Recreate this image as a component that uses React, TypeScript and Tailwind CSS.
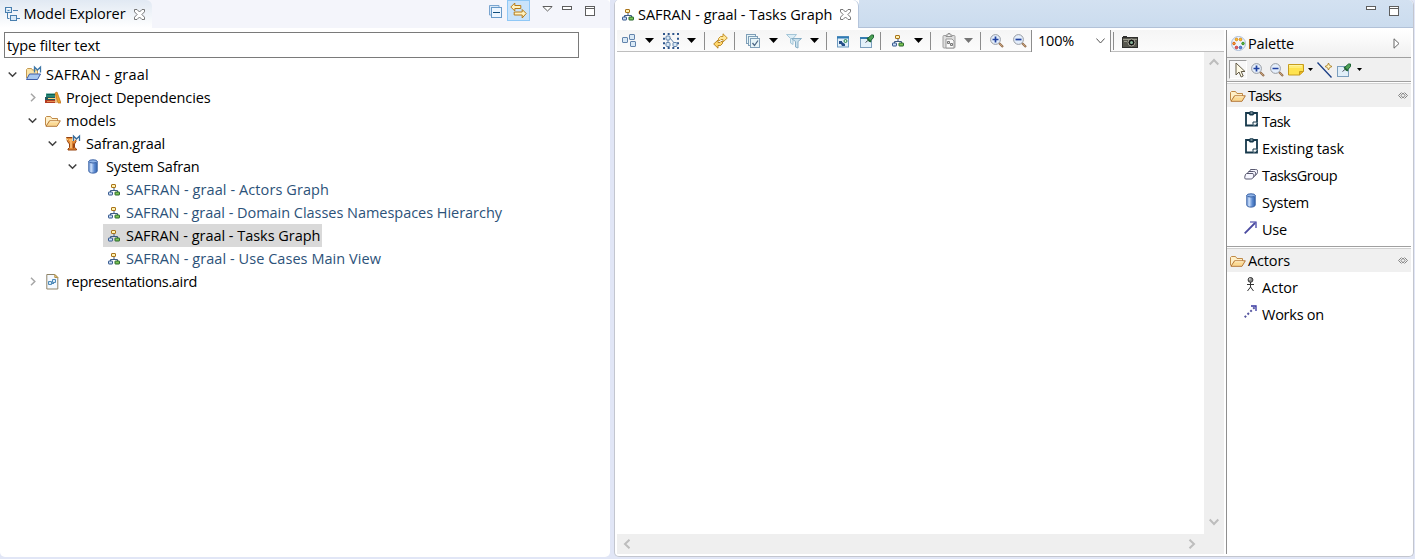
import { useLayoutEffect, useRef, useState } from "react";
import type { ReactNode } from "react";

/** Single-line label whose tracking is adjusted to fill a given width. */
function Label({ text, w, className = "" }: { text: string; w: number; className?: string }) {
  const ref = useRef<HTMLSpanElement>(null);
  const [spacing, setSpacing] = useState(0);
  useLayoutEffect(() => {
    if (ref.current) {
      const natural = ref.current.getBoundingClientRect().width - spacing * text.length;
      setSpacing((w - natural) / text.length);
    }
  }, [text, w]);
  return (
    <span className={`block shrink-0 whitespace-pre ${className}`}>
      <span ref={ref} className="inline-block" style={{ letterSpacing: spacing }}>
        {text}
      </span>
    </span>
  );
}

function Icon({ children, className = "", w = 16, h = 16 }: { children: ReactNode; className?: string; w?: number; h?: number }) {
  return (
    <svg width={w} height={h} viewBox={`0 0 ${w} ${h}`} fill="none" className={`block shrink-0 ${className}`}>
      {children}
    </svg>
  );
}

const Hierarchy = ({ className = "" }: { className?: string }) => (
  <Icon w={12} h={12} className={className}>
    <path d="M6 4v2.500M2.500 8.500V6.500h7v2" stroke="#3c5a82" />
    <rect x="3.500" y=".5" width="4" height="3" rx=".4" fill="#fff3b0" stroke="#a9741b" />
    <rect x=".5" y="8" width="4" height="3" rx=".4" fill="#c9dcf4" stroke="#33568d" />
    <rect x="7" y="8" width="4.500" height="3" rx=".4" fill="#7cc455" stroke="#27652b" />
  </Icon>
);

const Folder = ({ className = "" }: { className?: string }) => (
  <Icon className={className}>
    <path d="M.5 12.500V4.500l1-1h4l1.500 2h5.500v3" fill="#fff0c8" stroke="#c08a48" />
    <path d="M1 13.300 4.500 7.800h10.800l-3.300 5.500z" fill="#fbd993" stroke="#b5783a" strokeLinejoin="round" />
    <path d="M5 8.800h8.500" stroke="#fff2cf" />
  </Icon>
);

const Cylinder = ({ className = "" }: { className?: string }) => (
  <Icon w={10} h={15} className={className}>
    <defs>
      <linearGradient id="cyl" x1="0" x2="1" y1="0" y2="0">
        <stop offset="0" stopColor="#7fa5e0" />
        <stop offset=".3" stopColor="#c6dbf8" />
        <stop offset=".65" stopColor="#5d8bd2" />
        <stop offset="1" stopColor="#3465ab" />
      </linearGradient>
    </defs>
    <path d="M.8 2.500v9.500C.8 14.800 9.200 14.800 9.200 12V2.500z" fill="url(#cyl)" stroke="#3b63a6" />
    <ellipse cx="5" cy="2.400" rx="4.200" ry="1.600" fill="#8fb4e8" stroke="#3b63a6" />
  </Icon>
);

const CloseX = ({ className = "" }: { className?: string }) => (
  <Icon w={11} h={11} className={className}>
    <path
      d="M.5.5h2.500l2.500 2.500L8 .5h2.500v2.300L7.900 5.500l2.600 2.700v2.300H8L5.500 8 3 10.500H.5V8.200l2.600-2.700L.5 2.800z"
      fill="#fff"
      stroke="#696969"
      strokeWidth=".9"
    />
  </Icon>
);

const Minimize = ({ className = "" }: { className?: string }) => (
  <Icon w={10} h={4} className={className}>
    <rect x=".5" y=".5" width="9" height="3" fill="#fff" stroke="#5e5e5e" />
  </Icon>
);

const Maximize = ({ className = "" }: { className?: string }) => (
  <Icon w={10} h={10} className={className}>
    <rect x=".5" y=".5" width="9" height="9" fill="#fff" stroke="#5e5e5e" />
    <path d="M1 2.500h8" stroke="#5e5e5e" />
  </Icon>
);

const Drop = ({ className = "", color = "#000" }: { className?: string; color?: string }) => (
  <Icon w={9} h={5} className={className}>
    <path d="M0 0h9L4.500 5z" fill={color} />
  </Icon>
);

const SmallDrop = ({ className = "" }: { className?: string }) => (
  <Icon w={5} h={3} className={className}>
    <path d="M0 0h5L2.500 3z" fill="#000" />
  </Icon>
);

const Sep = ({ className = "" }: { className?: string }) => <i className={`block h-[18px] w-px shrink-0 bg-[#8d8d8d] ${className}`} />;

const Magnifier = ({ plus = false, className = "" }: { plus?: boolean; className?: string }) => (
  <Icon w={14} h={14} className={className}>
    <path d="m9 9 4 4" stroke="#8f6b4b" strokeWidth="2.200" />
    <path d="m9.500 9.500 3 3" stroke="#d8ae81" strokeWidth=".8" />
    <circle cx="5.500" cy="5.500" r="4.900" fill="#e4eefb" stroke="#989ca3" />
    <path d={plus ? "M2.500 5.500h6M5.500 2.500v6" : "M2.500 5.500h6"} stroke="#20419f" strokeWidth="1.700" />
  </Icon>
);

const Clipboard = ({ className = "" }: { className?: string }) => (
  <Icon w={13} h={16} className={className}>
    <path d="M1 2h11v12.500H1z" fill="#fff" stroke="#16384b" strokeWidth="1.800" />
    <path d="M3.500 2 5 .3h3L9.500 2v1L8 4.500H5L3.500 3z" fill="#16384b" />
    <path d="M5.500 1.500h2v1h-2z" fill="#c8d4da" />
    <path d="M8 13.500v-2.500h3" stroke="#16384b" />
    <path d="M9 14.500 12 11.500" stroke="#dfe8ec" />
  </Icon>
);

const Pin = () => (
  <>
    <path d="m5.500 8.500 3-2.500" stroke="#4a4f5a" />
    <path d="M7.500 4.500 11.500 1h2v2.500L10 7.500 8.500 7z" fill="#4da155" stroke="#1e6433" />
    <path d="m7 4 4 4" stroke="#1e6433" strokeWidth="1.500" />
  </>
);

const Twist = ({ open }: { open: boolean }) => (
  <Icon w={9} h={9}>
    {open ? <path d="m.7 2.500 3.800 3.800L8.300 2.500" stroke="#404040" strokeWidth="1.500" /> : <path d="m3 .7 3.800 3.800L3 8.300" stroke="#a6a6a6" strokeWidth="1.500" />}
  </Icon>
);

const ProjectIcon = () => (
  <Icon w={17} h={17} className="-mt-[3px]">
    <path d="M1.500 13V4.500l1-1h4l1 1.500h5v5" fill="#fbe4a6" stroke="#c49a52" />
    <path d="m1.500 14.500 3-5.500h11l-3 5.500z" fill="#a8c7ef" stroke="#3f5da8" strokeLinejoin="round" />
    <path d="M9.500 7.500V2l3 3 3-3v5.500" stroke="#3d77a8" strokeWidth="1.300" />
  </Icon>
);

const BooksIcon = () => (
  <Icon>
    <path d="M1 3.500h9V7H1z" fill="#268674" />
    <path d="M2 4.500h8" stroke="#0b5f56" />
    <path d="M0 7h10v3H0z" fill="#23595e" />
    <path d="M3 8.500h7" stroke="#ffd77a" />
    <path d="M0 10h10v3H0z" fill="#b33b22" />
    <path d="M2 11.500h8" stroke="#e58e50" />
    <path d="m10 3 2-1 4 11h-3z" fill="#eba52c" stroke="#bc6b12" strokeWidth=".7" />
    <path d="M11 4v9" stroke="#d5821e" />
  </Icon>
);

const GraalIcon = () => (
  <Icon w={17} h={17} className="-mt-[3px]">
    <path d="M1.500 3.500h9.500v4L9.500 10v3.500l2 1.500v1H3v-1l1.500-1.500V10L2.500 7.500z" fill="#e38a35" stroke="#95420f" />
    <path d="M1 4.500 3 6M6 5v9" stroke="#ffd18a" strokeWidth="1.200" />
    <path d="M8.500 9.500v5" stroke="#9f4412" strokeWidth="1.500" />
    <path d="M4 5h4v2H4z" fill="#fbbb62" />
    <path d="M8.500 7V2l3 3 3-3v5" stroke="#fff" strokeWidth="2.500" opacity=".8" />
    <path d="M8.500 7V2l3 3 3-3v5" stroke="#376d9d" strokeWidth="1.300" />
  </Icon>
);

const FileIcon = () => (
  <Icon w={14} h={16} className="ml-[1px]">
    <path d="M.8.5h8l3 3v11.500h-11z" fill="#f4f9ff" stroke="#8f8468" />
    <path d="M8.800.5v3h3z" fill="#eed58e" stroke="#b2924e" />
    <path d="M2.500 7.500h3v3h-3zM6.500 5.500h3v3h-3zM5.500 9.500h2.500" fill="#d7e9f6" stroke="#4e8ab9" />
  </Icon>
);

type Row = { depth: number; text: string; w: number; icon: ReactNode; open?: boolean; link?: boolean; selected?: boolean };

const rows: Row[] = [
  { depth: 0, text: "SAFRAN - graal", w: 103, icon: <ProjectIcon />, open: true },
  { depth: 1, text: "Project Dependencies", w: 144.5, icon: <BooksIcon />, open: false },
  { depth: 1, text: "models", w: 50, icon: <Folder />, open: true },
  { depth: 2, text: "Safran.graal", w: 79, icon: <GraalIcon />, open: true },
  { depth: 3, text: "System Safran", w: 93.5, icon: <Cylinder className="ml-[3px]" />, open: true },
  { depth: 4, text: "SAFRAN - graal - Actors Graph", w: 203, icon: <Hierarchy className="ml-[3px]" />, link: true },
  { depth: 4, text: "SAFRAN - graal - Domain Classes Namespaces Hierarchy", w: 376, icon: <Hierarchy className="ml-[3px]" />, link: true },
  { depth: 4, text: "SAFRAN - graal - Tasks Graph", w: 194.5, icon: <Hierarchy className="ml-[3px]" />, selected: true },
  { depth: 4, text: "SAFRAN - graal - Use Cases Main View", w: 255, icon: <Hierarchy className="ml-[3px]" />, link: true },
  { depth: 1, text: "representations.aird", w: 131, icon: <FileIcon />, open: false },
];

const indents = ["pl-[8px]", "pl-[28px]", "pl-[48px]", "pl-[68px]", "pl-[88px]"];

function TreeRow({ row }: { row: Row }) {
  return (
    <div className={`flex h-[23px] items-center ${indents[row.depth]}`}>
      <span className="flex w-[15px] shrink-0">{row.open !== undefined && <Twist open={row.open} />}</span>
      <span className={`flex h-[23px] items-center ${row.selected ? "bg-[#d9d9d9] pr-[1px]" : ""}`}>
        <span className="flex w-[23px] shrink-0 pl-[2px]">{row.icon}</span>
        <Label text={row.text} w={row.w} className={row.link ? "text-[#2c5279]" : "text-black"} />
      </span>
    </div>
  );
}

function ModelExplorer() {
  return (
    <section className="flex h-[557px] w-[610px] shrink-0 flex-col rounded-b-[5px] bg-white">
      <header className="flex h-7 shrink-0 rounded-tr-[4px] bg-[#f4f5fb]">
        <div className="flex w-[152px] items-center rounded-tr-[6px] bg-linear-to-b from-[#e1e9f3] to-white pl-[5px]">
          <Icon w={15} h={14}>
            <rect x=".5" y=".5" width="6" height="5" fill="#d9e9f7" stroke="#487eae" />
            <path d="M2.500 3.500h2M8 3.500h5M2.500 6v5.500h2M12 11.500h3" stroke="#487eae" />
            <rect x="5.500" y="8.500" width="6" height="5" fill="#d9e9f7" stroke="#487eae" />
            <path d="M2 1.500h3" stroke="#fff" />
          </Icon>
          <Label text="Model Explorer" w={102} className="ml-[3.500px] pb-[1px]" />
          <CloseX className="ml-[8px]" />
        </div>
        <div className="flex flex-1 items-start">
          <Icon w={13} h={13} className="mt-[5px] ml-[337px]">
            <path d="M.5 10V.5H10V2M.5 10H2" fill="#d9e8f7" stroke="#7aa5d0" />
            <rect x="2.500" y="2.500" width="10" height="10" fill="#eef6ff" stroke="#6799c8" />
            <path d="M4 7.500h7" stroke="#114e7c" />
          </Icon>
          <span className="ml-[5px] flex h-[21px] w-[23px] items-center justify-center border border-[#90c8f6] bg-[#c9e3fb]">
            <Icon w={17} h={17}>
              <path d="m.8 5 4-4v2.500h6v3h-6V9z" fill="#fff2bf" stroke="#b77b18" />
              <path d="m16.200 11.500-4-4V10h-8v3h8v3z" fill="#fff2bf" stroke="#b77b18" />
            </Icon>
          </span>
          <Icon w={11} h={6} className="mt-[6px] ml-[12px]">
            <path d="M.8.5h9.400L5.500 5z" fill="#fff" stroke="#5e5e5e" />
          </Icon>
          <Minimize className="mt-[6px] ml-[9px]" />
          <Maximize className="mt-[6px] ml-[13px]" />
        </div>
      </header>
      <div className="mt-[4px] ml-[4px] flex h-[26px] w-[575px] shrink-0 items-center border border-[#7a7a7a] pt-[1px] pl-[2px]">
        <Label text="type filter text" w={93} />
      </div>
      <div className="mt-[5px] flex flex-col">
        {rows.map((r) => (
          <TreeRow key={r.text} row={r} />
        ))}
      </div>
    </section>
  );
}

function Toolbar() {
  return (
    <div className="flex h-[22px] shrink-0 items-center border-b border-[#bebebe] bg-linear-to-b from-[#f5f5f5] to-[#fcfcfc] pl-[5px]">
      <Icon w={14} h={14}>
        <g fill="#d9e9f6" stroke="#6384ac">
          <rect x=".5" y="3.500" width="5" height="5" rx=".5" />
          <rect x="7.500" y=".5" width="5" height="5" rx=".5" />
          <rect x="8.500" y="7.500" width="5" height="5" rx=".5" />
        </g>
      </Icon>
      <Drop className="ml-[9px]" />
      <Icon className="ml-[9px]">
        <path d="M0 1h16M0 15h16" stroke="#2f568c" strokeWidth="2" strokeDasharray="2 2.660" />
        <path d="M1 4.700v8M15 4.700v8" stroke="#2f568c" strokeWidth="2" strokeDasharray="2 2.660" />
        <g fill="#d9e9f6" stroke="#6384ac">
          <path d="m7 5 5 6M5 6v4" />
          <rect x="3" y="3" width="4" height="4" rx="1" />
          <rect x="3" y="9.500" width="4" height="4" rx="1" />
          <rect x="10" y="9.500" width="4" height="4" rx="1" />
        </g>
      </Icon>
      <Drop className="ml-[8px]" />
      <Sep className="ml-[8px]" />
      <Icon w={15} h={16} className="ml-[8px]">
        <path d="M5.500 7.500V5.500l2-2H10V.8L14.300 5 10 9V6.500H8l-1 1z" fill="#ffe697" stroke="#c08a1e" strokeWidth=".9" strokeLinejoin="round" />
        <path d="M9.500 8.500v2l-2 2H5v2.700L.7 11 5 7v2.500h2l1-1z" fill="#ffd66c" stroke="#b07a18" strokeWidth=".9" strokeLinejoin="round" />
      </Icon>
      <Sep className="ml-[6px]" />
      <Icon w={14} h={14} className="ml-[11px]">
        <g fill="#e8f5f8" stroke="#7f9fb8">
          <rect x=".5" y=".5" width="9" height="9" />
          <rect x="2.500" y="2.500" width="9" height="9" />
          <rect x="4.500" y="4.500" width="9" height="9" />
        </g>
        <path d="m6.500 9 2 2.500L12 6.500" stroke="#4e6886" strokeWidth="1.300" />
      </Icon>
      <Drop className="ml-[9px]" />
      <Icon className="ml-[8px]">
        <path d="M.5 1.500h10l-3.500 4v6l-2.500-1.500V5.500z" fill="#dcedf5" stroke="#a5c6d8" />
        <path d="M5.500 5.500h10l-3.500 3v6.500l-2.500-1V8.500z" fill="#cae1ed" stroke="#86adc5" />
      </Icon>
      <Drop className="ml-[8px]" />
      <Sep className="ml-[7px]" />
      <Icon w={12} h={12} className="mt-[2px] ml-[10px]">
        <rect x=".5" y=".5" width="11" height="10.500" fill="#e2f0fa" stroke="#6d9bc1" />
        <path d="M0 1.500h12" stroke="#2f7ab4" strokeWidth="2" />
        <path d="M2 5h3v1l3 2v2H5L4 8H2z" fill="#254f88" />
        <circle cx="8.500" cy="5" r="1.500" fill="#d9f2dd" stroke="#228144" />
      </Icon>
      <Icon w={15} h={14} className="ml-[11px]">
        <rect x=".5" y="3.500" width="11" height="10" fill="#e3f1fa" stroke="#7b9ebd" />
        <path d="M0 4h12" stroke="#367db1" strokeWidth="2" />
        <Pin />
      </Icon>
      <Sep className="ml-[5px]" />
      <Hierarchy className="ml-[11px]" />
      <Drop className="ml-[10px]" />
      <Sep className="ml-[7px]" />
      <Icon w={14} h={16} className="ml-[11px]">
        <rect x="1" y="2.500" width="12" height="12.500" rx="1" fill="#dedede" stroke="#a0a0a0" />
        <path d="M4 3.500V2h2V.5h2V2h2v1.500z" fill="#f7f7f7" stroke="#909090" />
        <path d="M4 6h6l2 2v7H4z" fill="#fafafa" stroke="#999" />
        <path d="M5.500 8.500h2v2h-2zM8.500 10.500h2v2h-2z" fill="#ddd" stroke="#777" />
      </Icon>
      <Drop color="#757575" className="ml-[8px]" />
      <Sep className="ml-[7px]" />
      <Magnifier plus className="ml-[9px]" />
      <Magnifier className="ml-[9px]" />
      <div className="ml-[4px] flex h-[22px] w-[80px] shrink-0 items-center border-x border-[#8d8d8d] bg-white pl-[6px]">
        <Label text="100%" w={36} />
        <Icon w={9} h={6} className="ml-[22px]">
          <path d="m.4.5 4.100 4.500L8.600.5" stroke="#555" />
        </Icon>
      </div>
      <Sep className="ml-[2px]" />
      <Icon w={16} h={12} className="mt-[2px] ml-[8px]">
        <rect x=".5" y="1.500" width="15" height="10" fill="#56564e" stroke="#2f2f2d" />
        <path d="M1 0h4v1H1z" fill="#2f2f2d" />
        <path d="M1 3.500h14M2 5.500h3" stroke="#99998b" />
        <circle cx="9.500" cy="6.500" r="3.500" fill="#111" stroke="#aaa99b" />
        <circle cx="9.500" cy="6.500" r="1.500" fill="#8ab69b" />
      </Icon>
    </div>
  );
}

function Chevron({ d }: { d: string }) {
  return (
    <Icon w={10} h={10}>
      <path d={d} stroke="#bdbdbd" strokeWidth="2" />
    </Icon>
  );
}

function Canvas() {
  return (
    <div className="flex min-h-0 flex-1 flex-col">
      <div className="flex min-h-0 flex-1">
        <div className="flex-1 bg-white" />
        <div className="flex w-5 flex-col items-center justify-between bg-[#efefef] pt-[5px] pr-[1px] pb-[7px]">
          <Chevron d="m.7 7.500 4.300-4.500 4.300 4.500" />
          <Chevron d="m.7 2.500 4.300 4.500 4.300-4.500" />
        </div>
      </div>
      <div className="flex h-5 items-center justify-between bg-[#efefef] pr-[27px] pb-[1px] pl-[5px]">
        <Chevron d="M7.500.7 3 5l4.500 4.300" />
        <Chevron d="M2.500.7 7 5 2.500 9.300" />
      </div>
    </div>
  );
}

function DrawerHead({ text, w }: { text: string; w: number }) {
  return (
    <div className="flex h-[23px] shrink-0 items-center bg-[#f0f0f0] pl-[3px]">
      <Folder />
      <Label text={text} w={w} className="ml-[2px]" />
      <Icon w={10} h={7} className="mr-[3px] ml-auto">
        <path d="m3.500.5-3 3 3 3M6.500.5l3 3-3 3M5 1 3 3.500 5 6M5 1l2 2.500L5 6" stroke="#777" strokeWidth=".9" />
      </Icon>
    </div>
  );
}

function Tool({ icon, text, w }: { icon: ReactNode; text: string; w: number }) {
  return (
    <div className="flex h-[27px] shrink-0 items-center pl-[17px]">
      <span className="flex h-[19px] w-[18px] shrink-0 items-start">{icon}</span>
      <Label text={text} w={w} className="mt-[3px]" />
    </div>
  );
}

function Palette() {
  return (
    <aside className="flex w-[185px] shrink-0 flex-col border-l border-[#8f8f8f] bg-white">
      <div className="flex h-[28px] shrink-0 items-center border-b border-[#a0a0a0] bg-linear-to-b from-white to-[#f0f0f0] pl-[4px]">
        <Icon w={15} h={15}>
          <circle cx="7.500" cy="7.500" r="7" fill="#f0f4fa" stroke="#a8bcd8" />
          <g strokeWidth=".8">
            <circle cx="5.500" cy="3.500" r="1.300" fill="#ffc02e" stroke="#d27c00" />
            <circle cx="9.500" cy="3.500" r="1.300" fill="#ffc02e" stroke="#d27c00" />
            <circle cx="3" cy="7.500" r="1.300" fill="#ff9c39" stroke="#cb5500" />
            <circle cx="12" cy="7.500" r="1.300" fill="#5bbc3e" stroke="#257c1a" />
            <circle cx="5.500" cy="11.500" r="1.300" fill="#ec5c59" stroke="#ae2430" />
            <circle cx="9.500" cy="11.500" r="1.300" fill="#5887df" stroke="#244caa" />
          </g>
        </Icon>
        <Label text="Palette" w={46} className="mt-[1px] ml-[2px]" />
        <Icon w={7} h={11} className="mr-[11px] ml-auto">
          <path d="M1 .8v9.400l5-4.700z" fill="#fff" stroke="#666" />
        </Icon>
      </div>
      <div className="flex h-[24px] shrink-0 items-center border-b border-[#a0a0a0] bg-[#f0f0f0] pl-[2px]">
        <span className="flex h-[19px] w-[18px] items-center justify-center border border-white border-t-[#9c9c9c] border-l-[#9c9c9c] bg-[#f8f8f8]">
          <Icon w={11} h={16} className="ml-1">
            <path d="M1 1v12l3-3 2.200 5 2-1-2-4.500H10z" fill="#fffbe7" stroke="#625a46" />
          </Icon>
        </span>
        <Magnifier plus className="ml-[4px]" />
        <Magnifier className="ml-[5px]" />
        <Icon w={16} h={12} className="ml-[4px]">
          <path d="M.5.5h15v7l-4 3.500H.5z" fill="#ffe34f" stroke="#c69c1e" />
          <path d="M1 1.500h13M1 3h13" stroke="#fff5a1" />
          <path d="M11.500 11V7.500h4" fill="#e7b322" stroke="#c69c1e" />
        </Icon>
        <SmallDrop className="ml-[4px]" />
        <Icon w={16} h={16} className="ml-[4px]">
          <path d="m.5.5 14 15" stroke="#183c84" strokeWidth="1.300" />
          <path d="m11.500 1 1 2.300 2.500 1.200-2.500 1.200-1 2.300-1-2.300L8 4.500l2.500-1.200z" fill="#fff3bd" stroke="#a6781b" strokeWidth=".8" />
        </Icon>
        <Icon w={15} h={14} className="ml-[4px]">
          <rect x=".5" y="3.500" width="11" height="10" fill="#e0eef8" stroke="#7b9ebd" />
          <Pin />
        </Icon>
        <SmallDrop className="ml-[5px]" />
      </div>
      <div className="flex h-[165px] shrink-0 flex-col border-b border-[#a0a0a0] pt-[1px]">
        <div className="border-t border-[#d2d2d2]"><DrawerHead text="Tasks" w={33} /></div>
        <Tool text="Task" w={28} icon={<Clipboard className="ml-[1px]" />} />
        <Tool text="Existing task" w={82} icon={<Clipboard className="ml-[1px]" />} />
        <Tool
          text="TasksGroup"
          w={75}
          icon={
            <Icon w={14} h={12} className="mt-[4px]">
              <g fill="#f7f7ff" stroke="#464660" strokeWidth=".9">
                <path d="M6.500.5h5c2 0 2.500 1 2 3l-1 2c-1 1-2 1-3 1h-4l-1-2z" />
                <path d="M4.500 2.500h5c2 0 2.500 1 2 3l-1 2c-1 1-2 1-3 1h-4l-1-2z" />
                <path d="M3 4.500h5c2 0 2 1 1.500 3s-1.500 2.500-3 2.500H2C.5 10 .5 9 1 7s1-2.500 2-2.500z" />
              </g>
            </Icon>
          }
        />
        <Tool text="System" w={47} icon={<Cylinder className="mt-[1px] ml-[2px]" />} />
        <Tool
          text="Use"
          w={25}
          icon={
            <Icon w={13} h={13} className="mt-[2px]">
              <path d="M.7 12.300 11 2" stroke="#4a4aa0" strokeWidth="1.800" />
              <path d="M6 1h6v6" stroke="#3535a0" strokeWidth="1.200" />
            </Icon>
          }
        />
      </div>
      <div className="mt-[1px] border-t border-[#d2d2d2]"><DrawerHead text="Actors" w={42} /></div>
      <div className="pt-[1px]">
        <Tool
          text="Actor"
          w={36}
          icon={
            <Icon w={9} h={15} className="ml-[2px]">
              <path d="M1 7.500h7M4.500 5v5L1.500 14M4.500 10l3 4" stroke="#333" />
              <circle cx="4.500" cy="2.900" r="2.400" fill="#888" stroke="#333" />
              <circle cx="3.800" cy="2.100" r=".8" fill="#eee" />
            </Icon>
          }
        />
        <Tool
          text="Works on"
          w={62}
          icon={
            <Icon w={13} h={13} className="mt-[1px]">
              <path d="M.7 12.300 11 2" stroke="#55559f" strokeWidth="2" strokeDasharray="2 2" />
              <path d="M7 1h5v5" stroke="#3535a0" strokeWidth="1.300" />
            </Icon>
          }
        />
      </div>
    </aside>
  );
}

function Editor() {
  return (
    <section className="flex h-[557px] w-[800px] shrink-0 flex-col overflow-hidden rounded-[5px] border border-t-0 border-[#c3c6cf] bg-white">
      <header className="flex h-7 shrink-0 bg-white">
        <div className="flex w-[244px] items-center rounded-tr-[6px] border-r border-[#b5c5dc] bg-white pl-[7px]">
          <Hierarchy className="mt-[1px]" />
          <Label text="SAFRAN - graal - Tasks Graph" w={194.5} className="mt-[1px] ml-[4px]" />
          <CloseX className="ml-[7.500px]" />
        </div>
        <div className="flex flex-1 items-start border-b border-[#b2c2d8] bg-linear-to-b from-[#d3e1f1] to-[#cbdcee]">
          <Minimize className="mt-[6px] ml-[507px]" />
          <Maximize className="mt-[6px] ml-[13px]" />
        </div>
      </header>
      <div className="flex h-[526px] shrink-0 pt-[2px] pr-[2px] pl-[2px]">
        <div className="flex min-w-0 flex-1 flex-col pr-[2px]">
          <Toolbar />
          <Canvas />
        </div>
        <Palette />
      </div>
    </section>
  );
}

export default function App() {
  return (
    <main className="flex h-[559px] w-[1415px] overflow-hidden bg-[#e1e6f6] font-['Open_Sans','Noto_Sans',sans-serif] text-[14.500px] leading-[22px] text-black">
      <ModelExplorer />
      <div className="w-1 shrink-0" />
      <Editor />
    </main>
  );
}
